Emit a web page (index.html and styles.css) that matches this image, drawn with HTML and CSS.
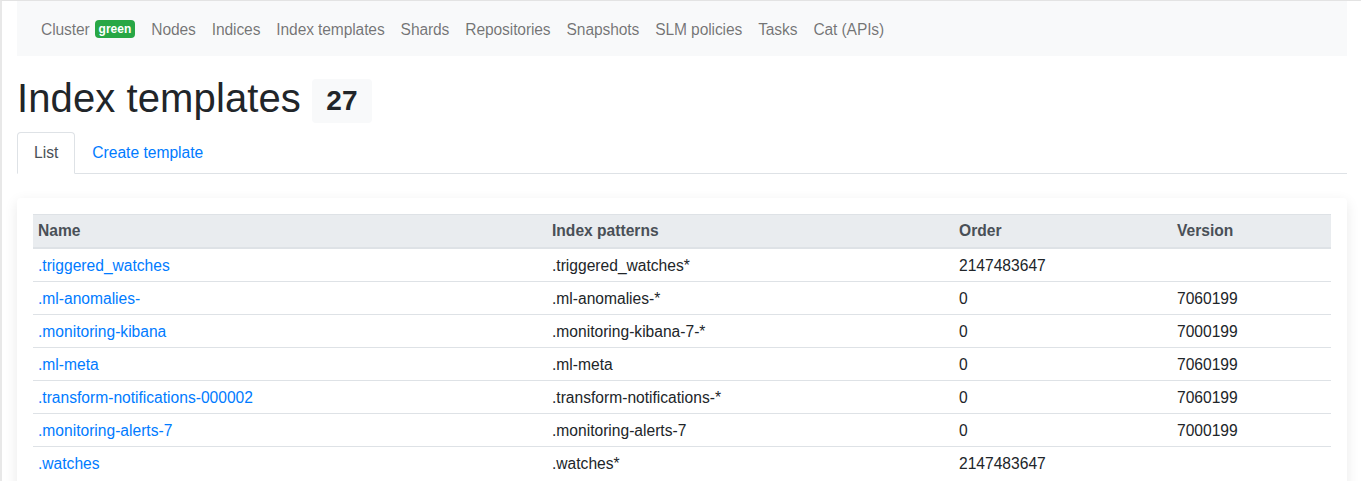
FILE: index.html
```html
<!DOCTYPE html>
<html>
<head>
<meta charset="utf-8">
<link rel="stylesheet" href="styles.css">
</head>
<body>
<div class="frame">
  <div class="container">
    <nav class="navbar">
      <a class="nav-link">Cluster <span class="badge-green">green</span></a>
      <a class="nav-link">Nodes</a>
      <a class="nav-link">Indices</a>
      <a class="nav-link">Index templates</a>
      <a class="nav-link">Shards</a>
      <a class="nav-link">Repositories</a>
      <a class="nav-link">Snapshots</a>
      <a class="nav-link">SLM policies</a>
      <a class="nav-link">Tasks</a>
      <a class="nav-link">Cat (APIs)</a>
    </nav>
    <h1 class="title"><span class="title-text">Index templates</span> <span class="count">27</span></h1>
    <div class="tabs">
      <a class="tab active">List</a>
      <a class="tab">Create template</a>
    </div>
    <div class="card">
      <table class="table">
        <colgroup>
          <col class="c1"><col class="c2"><col class="c3"><col class="c4">
        </colgroup>
        <thead>
          <tr><th>Name</th><th>Index patterns</th><th>Order</th><th>Version</th></tr>
        </thead>
        <tbody>
          <tr><td><a>.triggered_watches</a></td><td>.triggered_watches*</td><td>2147483647</td><td></td></tr>
          <tr><td><a>.ml-anomalies-</a></td><td>.ml-anomalies-*</td><td>0</td><td>7060199</td></tr>
          <tr><td><a>.monitoring-kibana</a></td><td>.monitoring-kibana-7-*</td><td>0</td><td>7000199</td></tr>
          <tr><td><a>.ml-meta</a></td><td>.ml-meta</td><td>0</td><td>7060199</td></tr>
          <tr><td><a>.transform-notifications-000002</a></td><td>.transform-notifications-*</td><td>0</td><td>7060199</td></tr>
          <tr><td><a>.monitoring-alerts-7</a></td><td>.monitoring-alerts-7</td><td>0</td><td>7000199</td></tr>
          <tr><td><a>.watches</a></td><td>.watches*</td><td>2147483647</td><td></td></tr>
        </tbody>
      </table>
    </div>
  </div>
</div>
</body>
</html>
```

FILE: styles.css
```css
html, body {
  margin: 0;
  padding: 0;
  background: #fff;
  overflow: hidden;
}
body {
  font-family: "Liberation Sans", Arial, sans-serif;
  font-size: 16px;
  line-height: 1.5;
  color: #212529;
}
.frame {
  border-top: 1px solid #e3e3e3;
  border-left: 2px solid #e8e8e8;
  height: 481px;
  box-sizing: border-box;
  overflow: hidden;
}
.container {
  width: 1330px;
  margin-left: 15px;
}
.navbar {
  display: flex;
  align-items: center;
  background: #f8f9fa;
  height: 55px;
  padding: 2px 16px 0;
  box-sizing: border-box;
}
.nav-link {
  padding: 0 8px;
  color: rgba(0, 0, 0, 0.55);
  font-size: 15.6px;
  letter-spacing: -0.12px;
  display: flex;
  align-items: center;
}
.badge-green {
  display: inline-block;
  background: #28a745;
  color: #fff;
  font-weight: bold;
  font-size: 12px;
  line-height: 1;
  padding: 3px 4px 3px;
  border-radius: 4px;
  margin-left: 5px;
  letter-spacing: 0;
}
.title {
  margin: 18px 0 0;
  font-size: 40px;
  font-weight: 500;
  height: 52px;
  display: flex;
  align-items: flex-start;
}
.title-text {
  line-height: 48px;
  letter-spacing: 0.1px;
}
.count {
  display: inline-flex;
  align-items: center;
  justify-content: center;
  background: #f8f9fa;
  border-radius: 4px;
  font-size: 28px;
  font-weight: bold;
  width: 60px;
  height: 44px;
  margin-left: 11px;
  margin-top: 5px;
}
.tabs {
  display: flex;
  margin-top: 6px;
  border-bottom: 1px solid #dee2e6;
  height: 41px;
}
.tab {
  display: flex;
  align-items: center;
  padding: 0 16px;
  color: #007bff;
  border: 1px solid transparent;
  border-top-left-radius: 4px;
  border-top-right-radius: 4px;
  margin-bottom: -1px;
  font-size: 15.6px;
}
.tab.active {
  color: #495057;
  background: #fff;
  border-color: #dee2e6 #dee2e6 #fff;
}
.card {
  margin-top: 24px;
  background: #fff;
  border-radius: 4px;
  box-shadow: 0 4px 14px rgba(0, 0, 0, 0.09);
  padding: 16px;
}
.table {
  width: 100%;
  border-collapse: collapse;
  table-layout: fixed;
  font-size: 15.6px;
}
.c1 { width: 514px; }
.c2 { width: 407px; }
.c3 { width: 218px; }
.c4 { width: 159px; }
th {
  text-align: left;
  background: #e9ecef;
  color: #495057;
  font-weight: bold;
  padding: 4px 5px 5px;
  border-bottom: 2px solid #dee2e6;
  border-top: 1px solid #dee2e6;
}
td {
  padding: 4px 5px;
  border-top: 1px solid #dee2e6;
  height: 24px;
}
td a {
  color: #007bff;
}
```
